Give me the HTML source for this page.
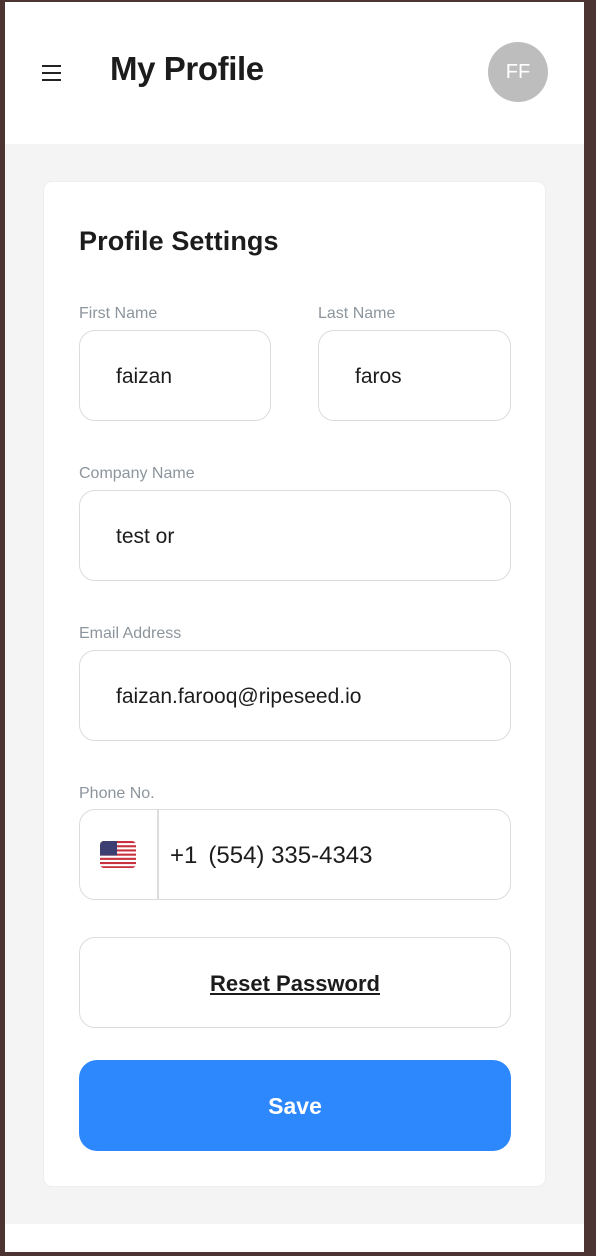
<!DOCTYPE html>
<html><head><style>
*{box-sizing:border-box;margin:0;padding:0}
body{width:596px;height:1256px;background:#4b3431;font-family:"Liberation Sans",sans-serif;position:relative;overflow:hidden}
.page{position:absolute;left:5px;top:2px;width:579px;height:1250px;background:#fff}
.gray{position:absolute;left:0;top:142px;width:579px;height:1080px;background:#f4f4f4}
.ham{position:absolute;left:42px;top:65px;width:19px}
.ham i{display:block;height:2px;background:#222;margin-bottom:5px}
.h1{position:absolute;left:110px;top:50px;font-size:33px;font-weight:bold;color:#1c1c1c;letter-spacing:-0.4px}
.av{position:absolute;left:488px;top:42px;width:60px;height:60px;border-radius:50%;background:#bdbdbd;color:#fff;font-size:20px;text-align:center;line-height:60px}
.card{position:absolute;left:43px;top:181px;width:503px;height:1006px;background:#fff;border-radius:9px;border:1px solid #eee}
.t{position:absolute;left:79px;top:226px;font-size:27px;font-weight:bold;color:#1c1c1c;letter-spacing:0.1px}
.l{position:absolute;font-size:16px;color:#8d959c}
.f{position:absolute;border:1.5px solid #dcdcdc;border-radius:16px;background:#fff;font-size:21px;color:#1c1c1c;padding-left:36px;padding-top:3px;display:flex;align-items:center}
.save{position:absolute;left:79px;top:1060px;width:432px;height:91px;background:#2d87fd;border-radius:18px;color:#fff;font-weight:bold;font-size:23px;display:flex;align-items:center;justify-content:center;padding-top:2px}
</style></head><body>
<div class="page"></div>
<div class="gray" style="left:5px;top:144px"></div>
<div class="ham"><i></i><i></i><i></i></div>
<div class="h1">My Profile</div>
<div class="av">FF</div>
<div class="card"></div>
<div class="t">Profile Settings</div>
<div class="l" style="left:79px;top:305px">First Name</div>
<div class="l" style="left:318px;top:305px">Last Name</div>
<div class="f" style="left:79px;top:330px;width:192px;height:91px">faizan</div>
<div class="f" style="left:318px;top:330px;width:193px;height:91px">faros</div>
<div class="l" style="left:79px;top:465px">Company Name</div>
<div class="f" style="left:79px;top:490px;width:432px;height:91px">test or</div>
<div class="l" style="left:79px;top:625px">Email Address</div>
<div class="f" style="left:79px;top:650px;width:432px;height:91px">faizan.farooq@ripeseed.io</div>
<div class="l" style="left:79px;top:785px">Phone No.</div>
<div class="f" style="left:79px;top:809px;width:432px;height:91px;padding-left:90px;font-size:24px"><span>+1</span><span style="margin-left:11px">(554) 335-4343</span></div>
<div style="position:absolute;left:157px;top:810px;width:1.5px;height:89px;background:#dcdcdc"></div>
<svg style="position:absolute;left:100px;top:841px" width="36" height="27" viewBox="0 0 36 27"><defs><clipPath id="c"><rect width="36" height="27" rx="4"/></clipPath></defs><g clip-path="url(#c)"><rect width="36" height="27" fill="#fff"/><g fill="#c8313e"><rect y="0" width="36" height="2.1"/><rect y="4.2" width="36" height="2.1"/><rect y="8.4" width="36" height="2.1"/><rect y="12.6" width="36" height="2.1"/><rect y="16.8" width="36" height="2.1"/><rect y="21" width="36" height="2.1"/><rect y="25.2" width="36" height="2.1"/></g><rect width="17" height="14.5" fill="#3d3f72"/></g></svg>
<div class="f" style="left:79px;top:937px;width:432px;height:91px;padding:2px 0 0 0;justify-content:center;font-weight:bold;text-decoration:underline;font-size:22px">Reset Password</div>
<div class="save">Save</div>
</body></html>
